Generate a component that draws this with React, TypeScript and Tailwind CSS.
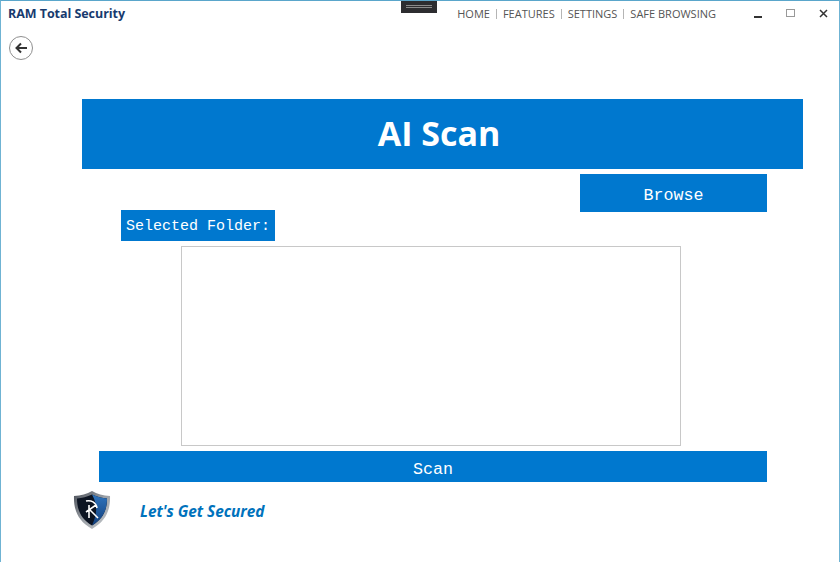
const navItems = ["HOME", "FEATURES", "SETTINGS", "SAFE BROWSING"];

const ShieldLogo = () => (
  <svg width="40" height="40" viewBox="0 0 40 40">
    <defs>
      <linearGradient id="rim" x1="0" y1="0" x2="1" y2="1">
        <stop offset="0" stopColor="#4a4f58" />
        <stop offset="0.5" stopColor="#9a9fa5" />
        <stop offset="1" stopColor="#c9cdd0" />
      </linearGradient>
      <linearGradient id="blue" x1="0" y1="0" x2="0" y2="1">
        <stop offset="0" stopColor="#2f74bd" />
        <stop offset="1" stopColor="#123f7c" />
      </linearGradient>
    </defs>
    <path d="M20 1 C25 4 31 5.500 38 6 C38.500 20 34 31 20 39 C6 31 1.500 20 2 6 C9 5.500 15 4 20 1 Z" fill="url(#rim)" />
    <path d="M20 4.500 C25 7 30 8 35 8.500 C35 20 31 29 20 35.500 C9 29 5 20 5 8.500 C10 8 15 7 20 4.500 Z" fill="#0c1422" />
    <path d="M20 4.500 C25 7 30 8 35 8.500 C35 20 31 29 20 35.500 C24 26 27 17 20 4.500 Z" fill="url(#blue)" />
    <path d="M17 15 V28 M18 20 L26 28 M14 11 C19 10 24 12 25 18 M24 15 L14 22" fill="none" stroke="#fff" strokeWidth="1.600" />
  </svg>
);

const Divider = () => <span className="h-[10px] w-px bg-[#b5b5b5]" />;

export default function App() {
  return (
    <div className="h-[562px] w-[840px] overflow-hidden border-x border-t border-x-[#6fb3d3] border-t-[#5aa6cb] bg-white font-['Open_Sans','Noto_Sans',sans-serif]">
      <div className="relative flex h-[29px] items-center pl-[7px]">
        <span className="mb-[2px] text-[12.5px] font-bold tracking-[-0.05px] text-[#173a6e]">RAM Total Security</span>
        <div className="absolute left-[400px] top-[-1px] flex h-[13px] w-[36px] items-center justify-center bg-[#2d2d30]">
          <div className="h-[3px] w-[26px] border-y border-[#8a8a8a]" />
        </div>
        <nav className="ml-auto flex items-center gap-[6px] pb-[3px] text-[11px] text-[#555]">
          {navItems.map((item, i) => (
            <div key={item} className="flex items-center gap-[6px]">
              {i > 0 && <Divider />}
              <span>{item}</span>
            </div>
          ))}
        </nav>
        <div className="ml-[38px] mr-[11px] flex items-center gap-[24px] pb-[3px]">
          <span className="mt-[5px] h-[2px] w-[8px] bg-[#333]" />
          <span className="mb-[2px] h-[8px] w-[9px] border border-[#999]" />
          <svg width="9" height="9" viewBox="0 0 9 9" className="mb-[1px]">
            <path d="M1 1 L8 8 M8 1 L1 8" stroke="#333" strokeWidth="1.500" />
          </svg>
        </div>
      </div>

      <div className="ml-[8px] mt-[6px] flex h-[24px] w-[24px] items-center justify-center rounded-full border border-[#8f8f8f]">
        <svg width="14" height="12" viewBox="0 0 14 12">
          <path d="M13 6 H2.500 M7 1.500 L2.500 6 L7 10.500" fill="none" stroke="#333" strokeWidth="2" />
        </svg>
      </div>

      <h1 className="ml-[81px] mt-[39px] flex h-[70px] w-[721px] items-center justify-center bg-[#0078cf] pb-[2px] pr-[7px] text-[34px] font-bold text-white">
        AI Scan
      </h1>

      <div className="ml-[579px] mt-[5px] flex h-[38px] w-[187px] items-center justify-center bg-[#0078cf] pt-[4px] font-['Liberation_Mono',monospace] text-[16.67px] text-white">
        Browse
      </div>

      <div className="relative ml-[120px] mt-[-2px] flex h-[31px] w-[154px] items-center justify-center bg-[#0078cf] pt-[4px] font-['Liberation_Mono',monospace] text-[15px] text-white">
        Selected Folder:
      </div>

      <div className="ml-[180px] mt-[5px] h-[200px] w-[500px] border border-[#c8c8c8] bg-white" />

      <div className="ml-[98px] mt-[5px] flex h-[31px] w-[668px] items-center justify-center bg-[#0078cf] pt-[5px] font-['Liberation_Mono',monospace] text-[16.67px] text-white">
        Scan
      </div>

      <div className="ml-[71px] mt-[8px] flex items-center">
        <ShieldLogo />
        <span className="ml-[28px] mt-[3px] text-[15.400px] font-bold italic tracking-[-0.05px] text-[#0072bc]">Let's Get Secured</span>
      </div>
    </div>
  );
}
